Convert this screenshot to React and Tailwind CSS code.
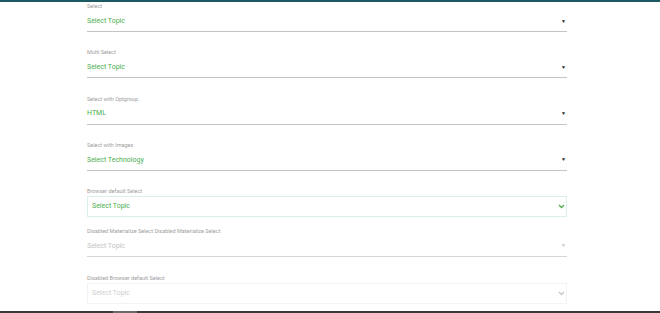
import React from 'react';

const font = { fontFamily: 'Roboto, "Noto Sans", sans-serif' };

const Arrow = ({ disabled }) => (
  <span className={`text-[5px] leading-none ${disabled ? 'text-[#c8c8c8]' : 'text-[#1a1a1a]'}`}>▼</span>
);

const Chevron = ({ disabled }) => (
  <svg width="7" height="5" viewBox="0 0 7 5" fill="none">
    <path
      d="M1 1l2.5 2.5L6 1"
      stroke={disabled ? '#c9c9c9' : '#4caf50'}
      strokeWidth="1.4"
    />
  </svg>
);

const MaterialSelect = ({ label, value, disabled, className = '' }) => (
  <div className={className}>
    <div className="h-[8px] text-[5.5px] leading-[8px] text-[#9e9e9e]">{label}</div>
    <div className="h-[21px] flex items-center justify-between pt-[1px]">
      <span className={`text-[7px] ${disabled ? 'text-[#c4c4c4]' : 'text-[#4caf50]'}`}>{value}</span>
      <span className="pr-[1px] flex items-center">
        <Arrow disabled={disabled} />
      </span>
    </div>
    <div className={`h-[1px] ${disabled ? 'bg-[#d6d6d6]' : 'bg-[#c4c4c4]'}`} />
  </div>
);

const BrowserSelect = ({ label, value, disabled, className = '' }) => (
  <div className={className}>
    <div className="h-[8px] text-[5.5px] leading-[8px] text-[#9e9e9e]">{label}</div>
    <div
      className={`mt-[1px] h-[21px] flex items-center justify-between pl-[4px] pr-[1px] border ${
        disabled ? 'border-[#f3f3f3]' : 'border-[#d9efec]'
      }`}
    >
      <span className={`text-[7px] ${disabled ? 'text-[#cfcfcf]' : 'text-[#4caf50]'}`}>{value}</span>
      <Chevron disabled={disabled} />
    </div>
  </div>
);

export default function App() {
  return (
    <div className="h-[313px] w-[660px] flex flex-col bg-white overflow-hidden" style={font}>
      <div className="h-[2px] bg-[#1c5a63]" />
      <div className="flex-1 pl-[87px]">
        <div className="w-[480px]">
          <MaterialSelect label="Select" value="Select Topic" className="mb-[16.25px]" />
          <MaterialSelect label="Multi Select" value="Select Topic" className="mb-[16.25px]" />
          <MaterialSelect label="Select with Optgroup" value="HTML" className="mb-[16.25px]" />
          <MaterialSelect label="Select with Images" value="Select Technology" className="mb-[16px]" />
          <BrowserSelect label="Browser default Select" value="Select Topic" className="mb-[10px]" />
          <MaterialSelect
            label="Disabled Materialize Select Disabled Materialize Select"
            value="Select Topic"
            disabled
            className="mb-[17px]"
          />
          <BrowserSelect label="Disabled Browser default Select" value="Select Topic" disabled />
        </div>
      </div>
      <div className="h-[2px] bg-[#3a3a3a] flex">
        <div className="ml-[113px] w-[24px] bg-[#6a6a6a]" />
      </div>
    </div>
  );
}
